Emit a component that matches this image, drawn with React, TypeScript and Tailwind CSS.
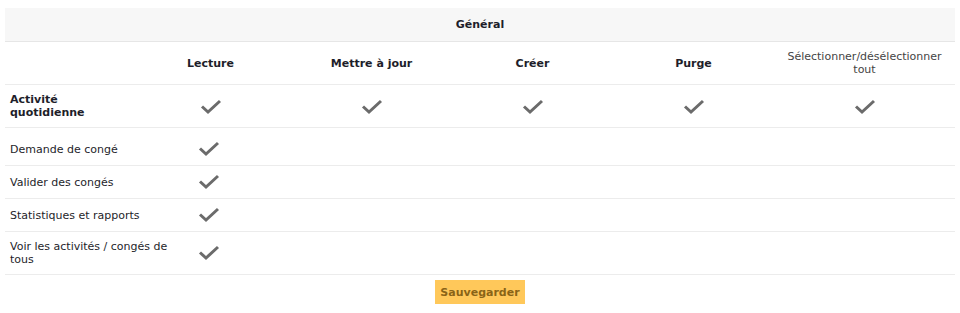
import React from 'react';

const columns = ['Lecture', 'Mettre à jour', 'Créer', 'Purge'];

const permissions = [
  { label: 'Demande de congé', h: 'h-[38px] pt-[5px]' },
  { label: 'Valider des congés', h: 'h-[33px]' },
  { label: 'Statistiques et rapports', h: 'h-[33px]' },
  { label: 'Voir les activités / congés de tous', h: 'h-[43px]' },
];

const Check = () => (
  <svg width="22" height="16" viewBox="0 0 22 16" fill="none">
    <path d="M2 7.5 L8 13 L20 2" stroke="#6b6b6b" strokeWidth="3" />
  </svg>
);

export default function App() {
  return (
    <div className="w-[960px] h-[313px] bg-white px-[5px] pt-[8px] text-[11px] leading-[13px] text-[#1e1e2a] font-['DejaVu_Sans','Verdana',sans-serif]">
      {/* group header */}
      <div className="h-[34px] flex items-center justify-center bg-[#f7f7f7] border-b border-[#e6e6e6] font-bold">
        Général
      </div>

      {/* action headers */}
      <div className="h-[43px] flex items-center border-b border-[#ececec]">
        <div className="w-[125px]" />
        {columns.map((c) => (
          <div key={c} className="w-[161px] text-center font-bold">
            {c}
          </div>
        ))}
        <div className="flex-1 text-center text-[#444]">
          Sélectionner/désélectionner
          <br />
          tout
        </div>
      </div>

      {/* section row */}
      <div className="h-[43px] flex items-center border-b border-[#ececec]">
        <div className="w-[125px] pl-[5px] font-bold">
          Activité
          <br />
          quotidienne
        </div>
        {columns.map((c) => (
          <div key={c} className="w-[161px] flex justify-center pt-[1px]">
            <Check />
          </div>
        ))}
        <div className="flex-1 flex justify-center pt-[1px]">
          <Check />
        </div>
      </div>

      {permissions.map((p) => (
        <div key={p.label} className={`${p.h} flex items-center border-b border-[#ececec]`}>
          <div className="w-[180px] pl-[5px] pr-[8px]">{p.label}</div>
          <div className="w-[48px] flex justify-center">
            <Check />
          </div>
        </div>
      ))}

      <div className="flex justify-center pt-[5px]">
        <button className="h-[24px] px-[5px] bg-[#ffc85a] text-[#8a6417] font-bold text-[11px] font-['DejaVu_Sans','Verdana',sans-serif]">
          Sauvegarder
        </button>
      </div>
    </div>
  );
}
